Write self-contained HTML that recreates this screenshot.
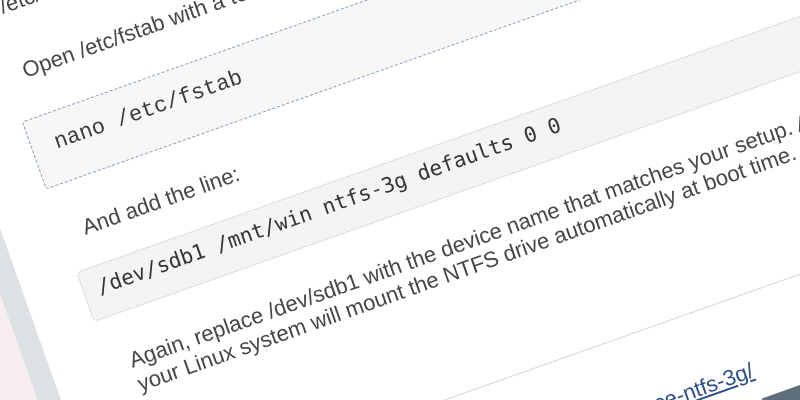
<!DOCTYPE html>
<html><head><meta charset="utf-8"><style>
html,body{margin:0;padding:0;width:800px;height:400px;overflow:hidden;background:#f6eeee;}
#wrap{position:relative;width:800px;height:400px;overflow:hidden;}
#r{position:absolute;left:0;top:0;width:10px;height:10px;transform-origin:0 0;transform:rotate(-19.5deg);}
#r div{position:absolute;white-space:nowrap;}
.t{font-family:"Liberation Sans",sans-serif;font-size:22px;line-height:25px;color:#464646;}
</style></head><body>
<div id="wrap">
<div id="r">
  <div style="left:-98px;top:-600px;width:22px;height:1500px;background:#dde1e4;"></div>
  <div style="left:-76px;top:-600px;width:1600px;height:1500px;background:#fff;"></div>
  <div class="t" style="left:-2px;top:-6px;">/etc/fstab file so the drive is mounted every time.</div>
  <div class="t" style="left:-2px;top:62px;">Open /etc/fstab with a text editor:</div>
  <div style="left:-20px;top:122px;width:1400px;height:70px;background:#f7f7f7;border:1px dashed #7d98b3;border-radius:3px;"></div>
  <div style="left:4px;top:143px;font-family:'Liberation Mono',monospace;font-size:22px;line-height:22px;color:#3a3a3a;">nano /etc/fstab</div>
  <div class="t" style="left:2px;top:230px;">And add the line:</div>
  <div style="left:-19px;top:282px;width:1400px;height:51px;background:#f4f4f4;border:1px solid #dcdcdc;border-radius:5px;"></div>
  <div style="left:-4px;top:294px;font-family:'DejaVu Sans Mono',monospace;font-size:20.9px;line-height:21px;color:#333;">/dev/sdb1 /mnt/win ntfs-3g defaults 0 0</div>
  <div class="t" style="left:2px;top:371px;">Again, replace /dev/sdb1 with the device name that matches your setup. After that,</div>
  <div class="t" style="left:2px;top:396px;">your Linux system will mount the NTFS drive automatically at boot time.</div>
  <div style="left:-20px;top:525px;width:1400px;height:1px;background:#d6d6d6;"></div>
  <div class="t" style="left:0;top:587px;width:586px;text-align:right;"><span style="color:#2b4f86;text-decoration:underline;">https://www.tuxera.com/community/open-source-ntfs-3g/</span></div>
  <div style="left:585px;top:630px;width:300px;height:80px;background:#5e6e7d;"></div>
</div>
</div>
</body></html>
